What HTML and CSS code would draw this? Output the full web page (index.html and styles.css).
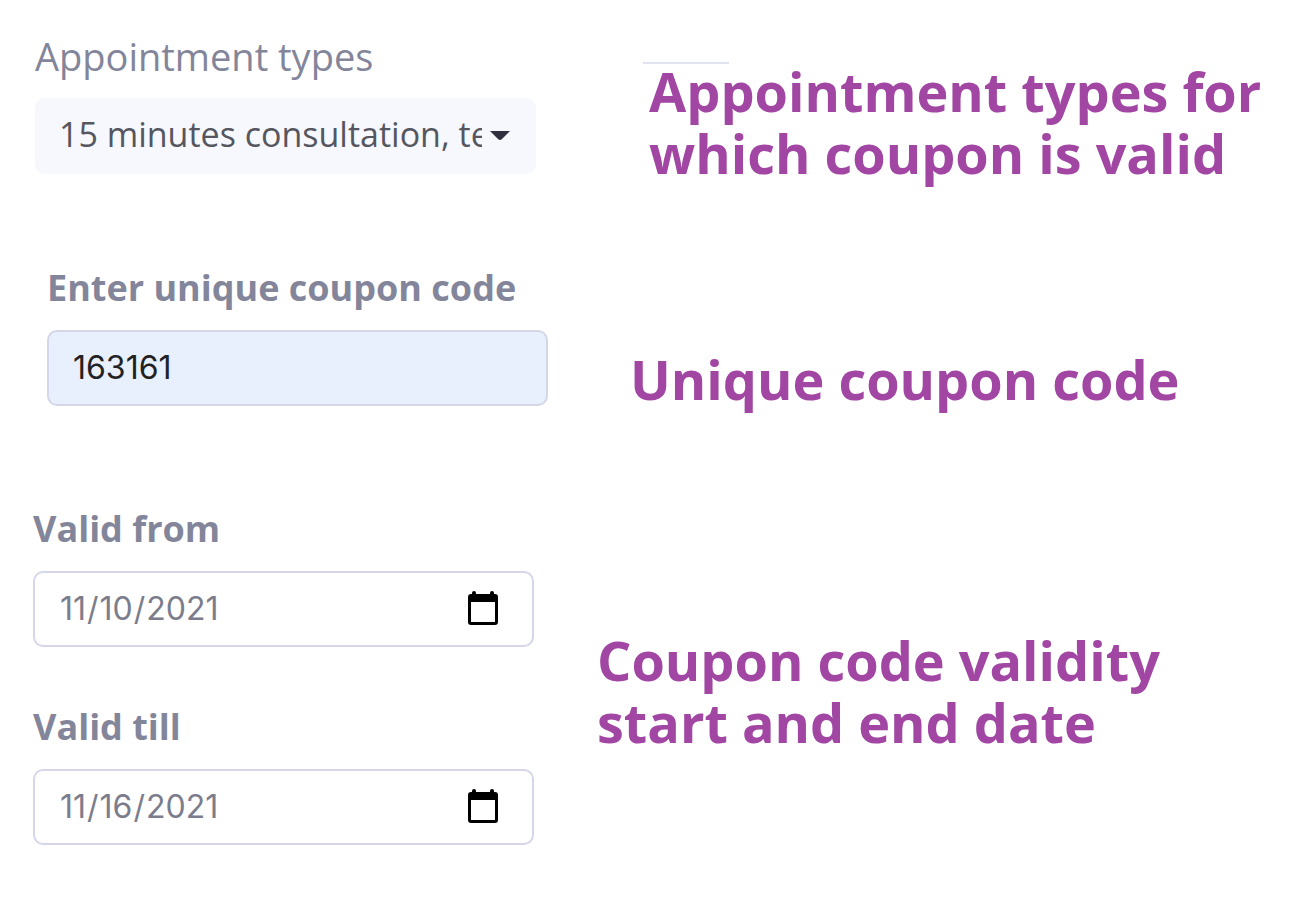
FILE: index.html
```
<!DOCTYPE html>
<html lang="en-US">
<head>
    <meta charset="UTF-8">
    <meta name="viewport" content="width=device-width, initial-scale=1.0">
    <title>Coupon Settings</title>
    <link rel="stylesheet" href="styles.css">
</head>
<body>
    <main class="coupon-form">
        <section class="row types-row">
            <div class="fields">
                <div class="field">
                    <label class="light" for="types">Appointment types</label>
                    <select id="types">
                        <option>15 minutes consultation, test</option>
                    </select>
                </div>
            </div>
            <div class="note ruled">
                <p>Appointment types for<br>which coupon is valid</p>
            </div>
        </section>

        <section class="row code-row">
            <div class="fields">
                <div class="field">
                    <label for="code">Enter unique coupon code</label>
                    <input type="text" id="code" class="filled" value="163161">
                </div>
            </div>
            <div class="note">
                <p>Unique coupon code</p>
            </div>
        </section>

        <section class="row dates-row">
            <div class="fields">
                <div class="field">
                    <label for="valid-from">Valid from</label>
                    <input type="date" id="valid-from" value="2021-11-10">
                </div>
                <div class="field">
                    <label for="valid-till">Valid till</label>
                    <input type="date" id="valid-till" value="2021-11-16">
                </div>
            </div>
            <div class="note">
                <p>Coupon code validity<br>start and end date</p>
            </div>
        </section>
    </main>
</body>
</html>
```
FILE: styles.css
```
* {
    box-sizing: border-box;
}

body {
    margin: 0;
    background: #fff;
    font-family: "Open Sans", "Noto Sans", sans-serif;
    color: #83859a;
}

.coupon-form {
    padding: 34px 20px 76px 33px;
}

.row {
    display: flex;
    align-items: flex-start;
}

.types-row {
    gap: 107px;
    margin-bottom: 82px;
    padding-left: 2px;
}

.code-row {
    gap: 82px;
    margin-bottom: 97px;
    padding-left: 14px;
}

.dates-row {
    gap: 63px;
}

.fields {
    flex: 0 1 501px;
    display: flex;
    flex-direction: column;
    gap: 58px;
}

.field {
    display: flex;
    flex-direction: column;
    gap: 20px;
}

label {
    font-size: 36px;
    font-weight: 700;
    line-height: 44px;
    white-space: nowrap;
}

label.light {
    font-size: 38px;
    font-weight: 400;
}

input,
select {
    width: 100%;
    height: 76px;
    padding: 0 34px 2px 24px;
    border: 2px solid #d5d7e8;
    border-radius: 10px;
    background: #fff;
    color: #7b7d8d;
    font-family: Inter, sans-serif;
    font-size: 32px;
    font-weight: 400;
}

select {
    appearance: none;
    padding: 0 52px 4px 22px;
    border-color: #f7f8fd;
    background: #f7f8fd url("data:image/svg+xml,%3Csvg xmlns='http://www.w3.org/2000/svg' viewBox='0 0 20 10'%3E%3Cpath d='M0 0h20l-8 8q-2 2-4 0z' fill='%232f2f3f'/%3E%3C/svg%3E") no-repeat right 24px center / 20px 10px;
    color: #55565f;
    font-family: "Open Sans", "Noto Sans", sans-serif;
    font-size: 34px;
}

input.filled {
    background: #e8effd;
    color: #222;
}

input[type="date"]::-webkit-datetime-edit {
    padding: 0;
}

input[type="date"]::-webkit-calendar-picker-indicator {
    width: 30px;
    height: 34px;
    margin: 0;
    padding: 0;
    background: url("data:image/svg+xml,%3Csvg xmlns='http://www.w3.org/2000/svg' viewBox='0 0 30 34'%3E%3Cpath fill-rule='evenodd' d='M4 3V2q0-2 2-2t2 2v1h14V2q0-2 2-2t2 2v1h1q3 0 3 3v25q0 3-3 3H3q-3 0-3-3V6q0-3 3-3zM3 11v20h24V11z'/%3E%3C/svg%3E") no-repeat center / 30px 34px;
}

.note {
    flex: 1;
    color: #a146a3;
    font-size: 54px;
    font-weight: 700;
    line-height: 62px;
    white-space: nowrap;
}

.note p {
    margin: 0;
}

.types-row .note {
    padding-top: 28px;
}

.code-row .note {
    padding-top: 82px;
}

.dates-row .note {
    padding-top: 122px;
}

.types-row .note p {
    padding-left: 6px;
}

/* short rule above the first note */
.ruled::before {
    content: "";
    display: block;
    width: 86px;
    height: 2px;
    margin-bottom: -4px;
    background: #e1e4f0;
}
```
